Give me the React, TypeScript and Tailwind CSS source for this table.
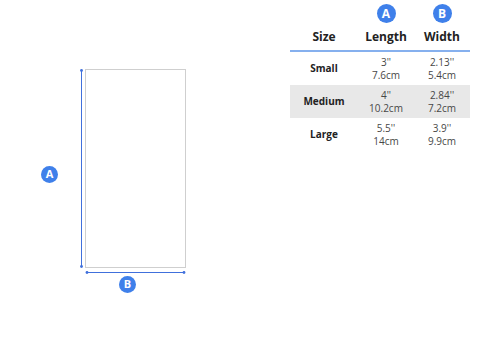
const rows = [
  { size: "Small", length: ["3''", "7.6cm"], width: ["2.13''", "5.4cm"] },
  { size: "Medium", length: ["4''", "10.2cm"], width: ["2.84''", "7.2cm"] },
  { size: "Large", length: ["5.5''", "14cm"], width: ["3.9''", "9.9cm"] },
];

function Badge({ label, big }: { label: string; big?: boolean }) {
  return (
    <div
      className={`flex items-center justify-center rounded-full bg-[#3f80ea] font-bold text-white ${
        big ? "h-[19px] w-[19px] text-[12px]" : "h-[17px] w-[17px] text-[11px]"
      }`}
    >
      {label}
    </div>
  );
}

export default function App() {
  return (
    <div className="flex h-[339px] w-[480px] bg-white font-['Open_Sans',sans-serif] text-[#222]">
      {/* drawing */}
      <div className="flex pl-[41px] pt-[69px]">
        <div className="flex h-[199px] items-center pt-[11px]">
          <Badge label="A" />
        </div>
        <svg className="ml-[21px]" width="5" height="199" viewBox="0 0 5 199">
          <line x1="2.5" y1="1.5" x2="2.5" y2="197.5" stroke="#4070dc" strokeWidth="1" />
          <circle cx="2.5" cy="1.5" r="1.4" fill="#4070dc" />
          <circle cx="2.5" cy="197.5" r="1.4" fill="#4070dc" />
        </svg>
        <div className="ml-[1px] flex flex-col">
          <div className="h-[199px] w-[101px] border border-[#cfcfcf]" />
          <svg className="mt-[2px]" width="101" height="5" viewBox="0 0 101 5">
            <line x1="2" y1="2.5" x2="99" y2="2.5" stroke="#4070dc" strokeWidth="1" />
            <circle cx="2" cy="2.5" r="1.4" fill="#4070dc" />
            <circle cx="99" cy="2.5" r="1.4" fill="#4070dc" />
          </svg>
          <div className="mt-[1px] pl-[34px]">
            <Badge label="B" />
          </div>
        </div>
      </div>

      {/* size table */}
      <div className="ml-auto mr-[10px] w-[180px] pt-[4px]">
        <div className="grid grid-cols-[68px_56px_56px]">
          <div />
          <div className="flex justify-center">
            <Badge label="A" big />
          </div>
          <div className="flex justify-center">
            <Badge label="B" big />
          </div>
        </div>
        <div className="grid h-[27px] grid-cols-[68px_56px_56px] items-center text-center text-[12px] font-bold leading-[16px]">
          <div>Size</div>
          <div>Length</div>
          <div>Width</div>
        </div>
        <div className="h-[2px] bg-[#86b0ee]" />
        {rows.map((r, i) => (
          <div
            key={r.size}
            className={`grid h-[33px] grid-cols-[68px_56px_56px] items-center text-center ${
              i === 1 ? "bg-[#e8e8e8]" : ""
            }`}
          >
            <div className="text-[10px] font-bold">{r.size}</div>
            <div className="text-[10px] leading-[12.5px] text-[#474747]">
              <div>{r.length[0]}</div>
              <div>{r.length[1]}</div>
            </div>
            <div className="text-[10px] leading-[12.5px] text-[#474747]">
              <div>{r.width[0]}</div>
              <div>{r.width[1]}</div>
            </div>
          </div>
        ))}
      </div>
    </div>
  );
}
